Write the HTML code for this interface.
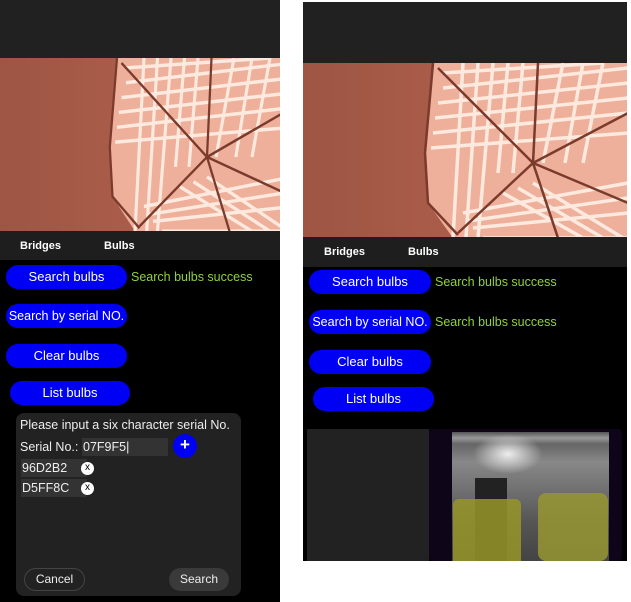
<!DOCTYPE html>
<html><head><style>
*{margin:0;padding:0;box-sizing:border-box}
body{width:631px;height:602px;background:#fff;position:relative;overflow:hidden;font-family:"Liberation Sans",Arial,sans-serif}
.abs{position:absolute}
.btn{position:absolute;background:#0000f5;color:#fff;border-radius:14px;font-size:13px;text-align:center;line-height:24px;height:24px}
.ok{position:absolute;color:#8fd23c;font-size:12.5px}
.tab{position:absolute;color:#fff;font-size:11px;font-weight:bold}
</style></head><body>
<svg width="0" height="0" style="position:absolute"><defs>
<linearGradient id="bg" x1="0" x2="1"><stop offset="0" stop-color="#9e5544"/><stop offset="1" stop-color="#b86650"/></linearGradient>
<g id="dome">
<rect width="325" height="175" fill="url(#bg)"/>
<polygon points="130,0 325,0 325,175 150,175 125,140 122,90" fill="#eeb09a"/>
<g stroke="#fff0e6" stroke-width="3.5" opacity=".9">
<line x1="140" y1="10" x2="300" y2="0"/><line x1="135" y1="40" x2="325" y2="20"/><line x1="130" y1="70" x2="325" y2="50"/>
<line x1="140" y1="25" x2="325" y2="5"/><line x1="132" y1="55" x2="325" y2="35"/><line x1="128" y1="85" x2="325" y2="70"/>
<line x1="160" y1="0" x2="150" y2="175"/><line x1="190" y1="0" x2="175" y2="175"/><line x1="220" y1="0" x2="210" y2="110"/>
<line x1="175" y1="0" x2="163" y2="175"/><line x1="205" y1="0" x2="195" y2="110"/>
<line x1="260" y1="0" x2="240" y2="100"/><line x1="300" y1="0" x2="280" y2="100"/><line x1="280" y1="0" x2="262" y2="100"/>
<line x1="160" y1="150" x2="325" y2="120"/><line x1="170" y1="165" x2="325" y2="150"/><line x1="180" y1="175" x2="325" y2="175"/>
<line x1="165" y1="158" x2="325" y2="135"/>
<line x1="200" y1="130" x2="280" y2="175"/><line x1="230" y1="120" x2="320" y2="175"/><line x1="215" y1="125" x2="300" y2="175"/>
</g>
<g stroke="#7a3a2c" stroke-width="2.5" fill="none">
<line x1="135" y1="5" x2="230" y2="100"/><line x1="230" y1="100" x2="325" y2="50"/><line x1="230" y1="100" x2="155" y2="170"/>
<line x1="230" y1="100" x2="255" y2="175"/><line x1="230" y1="100" x2="325" y2="140"/><line x1="230" y1="100" x2="235" y2="0"/>
<polyline points="130,0 122,90 125,140 155,172"/>
</g></g></defs></svg>

<!-- LEFT PANEL -->
<div class="abs" style="left:0;top:0;width:280px;height:602px;background:#000">
 <div class="abs" style="left:0;top:0;width:280px;height:58px;background:#212121"></div>
 <svg class="abs" style="left:0;top:58px" width="280" height="173" viewBox="0 0 280 173" preserveAspectRatio="none"><use href="#dome" transform="scale(0.9,0.99)"/></svg>
 <div class="abs" style="left:0;top:231px;width:280px;height:29px;background:#1e1e1e"></div>
 <div class="tab" style="left:20px;top:240px">Bridges</div>
 <div class="tab" style="left:104px;top:240px">Bulbs</div>
 <div class="btn" style="left:6px;top:265px;width:121px">Search bulbs</div>
 <div class="ok" style="left:131px;top:270px">Search bulbs success</div>
 <div class="btn" style="left:6px;top:304px;width:121px;font-size:12.5px">Search by serial NO.</div>
 <div class="btn" style="left:6px;top:344px;width:121px">Clear bulbs</div>
 <div class="btn" style="left:10px;top:381px;width:120px">List bulbs</div>
 <div class="abs" style="left:16px;top:413px;width:225px;height:183px;background:#222;border-radius:8px;color:#eee;font-size:12.5px">
  <div class="abs" style="left:4px;top:5px">Please input a six character serial No.</div>
  <div class="abs" style="left:4px;top:27px">Serial No.:</div>
  <div class="abs" style="left:66px;top:25px;width:86px;height:18px;background:#333;padding-left:1px;line-height:18px">07F9F5|</div>
  <div class="abs" style="left:157px;top:21px;width:24px;height:24px;border-radius:50%;background:#0000f5;color:#fff;text-align:center;line-height:22px;font-size:17px;font-weight:bold">+</div>
  <div class="abs" style="left:5px;top:46px;width:66px;height:18px;background:#333;line-height:18px;padding-left:1px">96D2B2</div>
  <div class="abs" style="left:65px;top:49px;width:13px;height:13px;border-radius:50%;background:#fff;color:#000;font-size:10px;text-align:center;line-height:12px">x</div>
  <div class="abs" style="left:5px;top:66px;width:66px;height:18px;background:#333;line-height:18px;padding-left:1px">D5FF8C</div>
  <div class="abs" style="left:65px;top:69px;width:13px;height:13px;border-radius:50%;background:#fff;color:#000;font-size:10px;text-align:center;line-height:12px">x</div>
  <div class="abs" style="left:8px;top:155px;width:61px;height:23px;border:1px solid #444;border-radius:12px;text-align:center;line-height:21px;font-size:12px">Cancel</div>
  <div class="abs" style="left:153px;top:155px;width:60px;height:23px;background:#3a3a3a;border-radius:12px;text-align:center;line-height:23px;font-size:12px">Search</div>
 </div>
</div>

<!-- RIGHT PANEL -->
<div class="abs" style="left:303px;top:2px;width:324px;height:559px;background:#000">
 <div class="abs" style="left:0;top:0;width:324px;height:61px;background:#212121"></div>
 <svg class="abs" style="left:0;top:61px" width="324" height="174" viewBox="0 0 324 174" preserveAspectRatio="none"><use href="#dome"/></svg>
 <div class="abs" style="left:0;top:235px;width:324px;height:30px;background:#1e1e1e"></div>
 <div class="tab" style="left:21px;top:244px">Bridges</div>
 <div class="tab" style="left:105px;top:244px">Bulbs</div>
 <div class="btn" style="left:6px;top:268px;width:122px">Search bulbs</div>
 <div class="ok" style="left:132px;top:273px">Search bulbs success</div>
 <div class="btn" style="left:6px;top:308px;width:122px;font-size:12.5px">Search by serial NO.</div>
 <div class="ok" style="left:132px;top:313px">Search bulbs success</div>
 <div class="btn" style="left:6px;top:348px;width:122px">Clear bulbs</div>
 <div class="btn" style="left:10px;top:385px;width:121px">List bulbs</div>
 <div class="abs" style="left:4px;top:427px;width:122px;height:132px;background:#222"></div>
 <div class="abs" style="left:126px;top:427px;width:193px;height:132px;background:#0e0618;border-radius:4px"></div>
 <div class="abs" style="left:149px;top:430px;width:157px;height:129px;background:linear-gradient(#555 0,#999 6px,#666 12px,#888 30px,#555 70%,#444)"></div>
 <div class="abs" style="left:170px;top:432px;width:70px;height:40px;background:radial-gradient(#eee,transparent 70%)"></div>
 <div class="abs" style="left:172px;top:476px;width:32px;height:83px;background:#222"></div>
 <div class="abs" style="left:150px;top:497px;width:68px;height:62px;background:rgba(150,150,40,.85);border-radius:6px 6px 0 0"></div>
 <div class="abs" style="left:235px;top:491px;width:70px;height:68px;background:rgba(150,150,50,.85);border-radius:8px"></div>
</div>
</body></html>
